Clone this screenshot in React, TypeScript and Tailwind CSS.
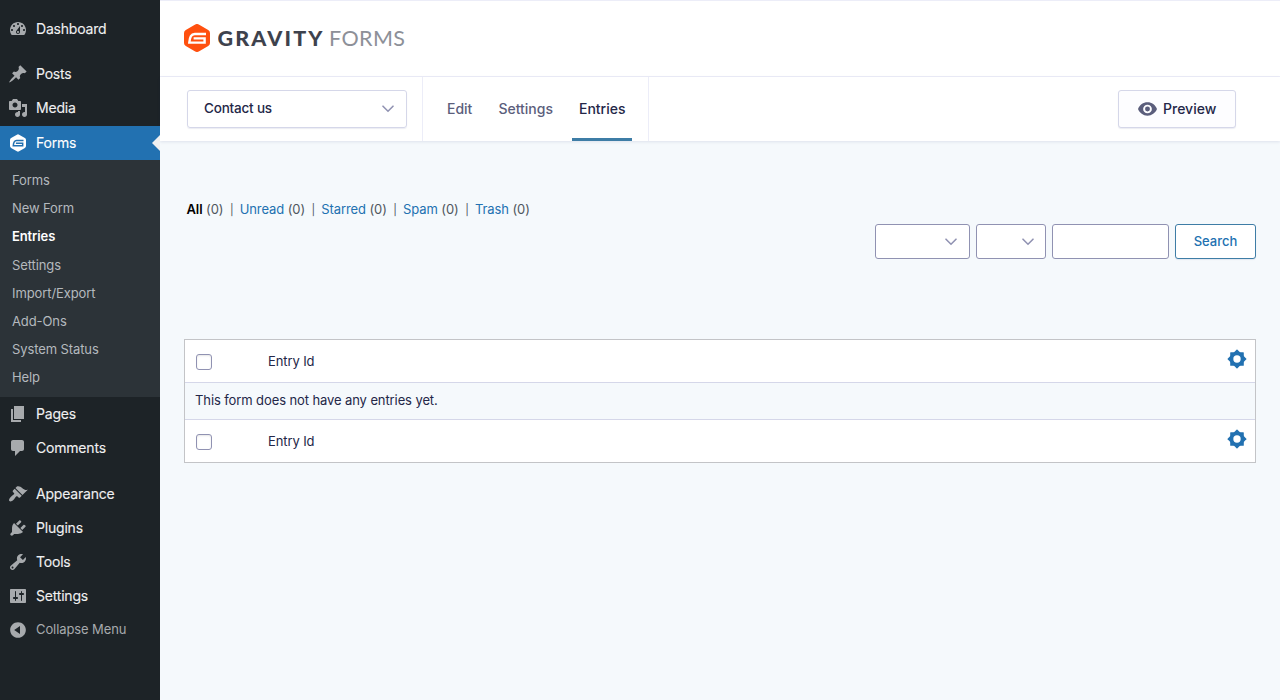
import React from "react";

const icons: Record<string, string> = {
  dashboard:
    "M3.76 16h12.48c1.1-1.37 1.76-3.11 1.76-5 0-4.42-3.58-8-8-8s-8 3.58-8 8c0 1.89.66 3.63 1.76 5zM10 4c.55 0 1 .45 1 1s-.45 1-1 1-1-.45-1-1 .45-1 1-1zM6 6c.55 0 1 .45 1 1s-.45 1-1 1-1-.45-1-1 .45-1 1-1zm8 0c.55 0 1 .45 1 1s-.45 1-1 1-1-.45-1-1 .45-1 1-1zm-5.37 5.55L12 7v6c0 1.1-.9 2-2 2s-2-.9-2-2c0-.57.24-1.08.63-1.45zM4 10c.55 0 1 .45 1 1s-.45 1-1 1-1-.45-1-1 .45-1 1-1zm12 0c.55 0 1 .45 1 1s-.45 1-1 1-1-.45-1-1 .45-1 1-1zm-5 3c0-.55-.45-1-1-1s-1 .45-1 1 .45 1 1 1 1-.45 1-1z",
  posts:
    "M10.44 3.02l1.82-1.82 6.36 6.35-1.83 1.82c-1.05-.68-2.48-.57-3.41.36l-.75.75c-.92.93-1.04 2.35-.35 3.41l-1.83 1.82-2.41-2.41-2.8 2.79c-.42.42-3.38 2.71-3.8 2.29s1.86-3.39 2.28-3.81l2.79-2.79L4.1 9.36l1.83-1.82c1.05.69 2.48.57 3.4-.36l.75-.75c.93-.92 1.05-2.35.36-3.41z",
  media:
    "M13 11V4c0-.55-.45-1-1-1h-1.67L9 1H5L3.67 3H2c-.55 0-1 .45-1 1v7c0 .55.45 1 1 1h10c.55 0 1-.45 1-1zM7 4.5c1.38 0 2.5 1.12 2.5 2.5S8.38 9.5 7 9.5 4.5 8.38 4.5 7 5.62 4.5 7 4.5zM14 6h5v10.5c0 1.38-1.12 2.5-2.5 2.5S14 17.88 14 16.5s1.12-2.5 2.5-2.5c.17 0 .34.02.5.05V9h-3V6zm-4 8.05V13h2v3.5c0 1.38-1.12 2.5-2.5 2.5S7 17.88 7 16.5 8.12 14 9.5 14c.17 0 .34.02.5.05z",
  pages: "M6 15V2h10v13H6zm-1 1h8v2H3V5h2v11z",
  comments:
    "M5 2h9c1.1 0 2 .9 2 2v7c0 1.1-.9 2-2 2h-2l-5 5v-5H5c-1.1 0-2-.9-2-2V4c0-1.1.9-2 2-2z",
  appearance:
    "M14.48 11.06L7.41 3.99l1.5-1.5c.5-.56 2.3-.47 3.51.32 1.21.8 1.43 1.28 2.91 2.1 1.18.64 2.45 1.26 4.45.85zm-.71.71L6.7 4.7 4.93 6.47c-.39.39-.39 1.02 0 1.41l1.06 1.06c.39.39.39 1.03 0 1.42-.6.6-1.43 1.11-2.21 1.69-.35.26-.7.53-1.01.84C1.43 14.23.4 16.08 1.4 17.07c.99 1 2.84-.03 4.18-1.36.31-.31.58-.66.85-1.02.57-.78 1.08-1.61 1.69-2.21.39-.39 1.02-.39 1.41 0l1.06 1.06c.39.39 1.02.39 1.41 0z",
  plugins:
    "M13.11 4.36L9.87 7.6 8 5.73l3.24-3.24c.35-.34 1.05-.2 1.56.32.52.51.66 1.21.31 1.55zm-8 1.77l.91-1.12 9.01 9.01-1.19.84c-.71.71-2.63 1.16-3.82 1.16H6.14L4.9 17.26c-.59.59-1.54.59-2.12 0-.59-.58-.59-1.53 0-2.12l1.24-1.24v-3.88c0-1.13.4-3.19 1.09-3.89zm7.26 3.97l3.24-3.24c.34-.35 1.04-.21 1.55.31.52.51.66 1.21.31 1.55l-3.24 3.25z",
  tools:
    "M16.68 9.77c-1.34 1.34-3.3 1.67-4.95.99l-5.41 6.52c-.99.99-2.59.99-3.58 0s-.99-2.59 0-3.57l6.52-5.42c-.68-1.65-.35-3.61.99-4.95 1.28-1.28 3.12-1.62 4.72-1.06l-2.89 2.89 2.82 2.82 2.86-2.87c.53 1.58.18 3.39-1.08 4.65zM3.81 16.21c.4.39 1.04.39 1.43 0 .4-.4.4-1.04 0-1.43-.39-.4-1.03-.4-1.43 0-.39.39-.39 1.03 0 1.43z",
  settings:
    "M18 16V4c0-.55-.45-1-1-1H3c-.55 0-1 .45-1 1v12c0 .55.45 1 1 1h14c.55 0 1-.45 1-1zM8 11h1c.55 0 1 .45 1 1s-.45 1-1 1H8v1.5c0 .28-.22.5-.5.5s-.5-.22-.5-.5V13H6c-.55 0-1-.45-1-1s.45-1 1-1h1V5.5c0-.28.22-.5.5-.5s.5.22.5.5V11zm5-2h-1c-.55 0-1-.45-1-1s.45-1 1-1h1V5.5c0-.28.22-.5.5-.5s.5.22.5.5V7h1c.55 0 1 .45 1 1s-.45 1-1 1h-1v5.5c0 .28-.22.5-.5.5s-.5-.22-.5-.5V9z",
  collapse:
    "M10 2.16c4.33 0 7.84 3.51 7.84 7.84s-3.51 7.84-7.84 7.84S2.16 14.33 2.16 10 5.67 2.16 10 2.16zm2 11.72V6.12L6.18 9.97z",
};

const submenu = [
  "Forms",
  "New Form",
  "Entries",
  "Settings",
  "Import/Export",
  "Add-Ons",
  "System Status",
  "Help",
];

const filters = ["All", "Unread", "Starred", "Spam", "Trash"];

const MenuItem = ({ icon, label }: { icon: string; label: string }) => (
  <a href="#" className="flex h-[34px] items-center pl-2 text-[14px] tracking-[-0.2px] text-[#f0f0f1]">
    <svg viewBox="0 0 20 20" className="mr-2 size-5 fill-[#a7aaad]">
      <path fillRule="evenodd" d={icons[icon]} />
    </svg>
    <span className="pb-0.5 [-webkit-text-stroke:0.1px]">{label}</span>
  </a>
);

const Hexagon = ({ className }: { className: string }) => (
  <svg viewBox="0 0 26 28" className={className}>
    <path
      stroke="none"
      d="M11.2.5a3.6 3.6 0 0 1 3.6 0l9.4 5.4A3.6 3.6 0 0 1 26 9v10a3.6 3.6 0 0 1-1.8 3.1l-9.4 5.4a3.6 3.6 0 0 1-3.6 0l-9.4-5.4A3.6 3.6 0 0 1 0 19V9a3.6 3.6 0 0 1 1.8-3.1z"
    />
    <path
      fill="none"
      strokeWidth="2.4"
      d="M22 10H10.800C8.800 10 7.700 10.800 6.900 12.200 6 13.800 5.500 16 5.300 18.600H20.600V14.400H9.600"
    />
  </svg>
);

const Chevron = () => (
  <svg viewBox="0 0 12 8" fill="none" className="h-2 w-3">
    <path d="M1 1.200l5 5 5-5" stroke="#9092b2" strokeWidth="1.600" strokeLinecap="round" />
  </svg>
);

// eight pointed cog, two squares laid over each other
const Gear = () => (
  <svg viewBox="0 0 20 20" className="size-5 fill-[#2271b1]">
    <rect x="3.200" y="3.200" width="13.600" height="13.600" rx="0.600" />
    <rect x="3.200" y="3.200" width="13.600" height="13.600" rx="0.300" transform="rotate(45 10 10)" />
    <circle cx="10" cy="10" r="3.700" className="fill-white" />
  </svg>
);

const TableRow = () => (
  <div className="flex h-[42px] items-center bg-white pl-[11px] pr-2">
    <span className="mt-0.5 size-4 rounded-[3px] border border-[#9092b2] bg-white shadow-[inset_0_1px_2px_rgba(0,0,0,0.1)]" />
    <span className="ml-14 mt-0.5 flex-1">Entry Id</span>
    <span className="-mt-1">
      <Gear />
    </span>
  </div>
);

const App = () => {
  return (
    <div className="flex h-[700px] w-[1280px] overflow-hidden bg-[#f5f9fc] font-['Inter',sans-serif] text-[13px] tracking-[-0.1px] text-[#242748]">
      {/* Admin menu */}
      <nav className="w-40 shrink-0 bg-[#1d2327] pt-3">
        <MenuItem icon="dashboard" label="Dashboard" />
        <div className="mt-[11px]">
          <MenuItem icon="posts" label="Posts" />
          <MenuItem icon="media" label="Media" />
        </div>
        <a
          href="#"
          className="relative mt-px flex h-[34px] items-center bg-[#2271b1] pl-[10px] text-[14px] tracking-[-0.2px] text-white"
        >
          <Hexagon className="mr-[10px] h-[18px] w-4 fill-white stroke-[#2271b1]" />
          <span className="pb-0.5 [-webkit-text-stroke:0.1px]">Forms</span>
          <span className="absolute right-0 top-[9px] border-y-8 border-r-8 border-y-transparent border-r-[#f0f0f1]" />
        </a>
        <ul className="h-[237px] bg-[#2c3338] pt-[6.6px] text-[#b4b9be]">
          {submenu.map((item) => (
            <li
              key={item}
              className={
                item === "Entries"
                  ? "flex h-[28.2px] items-center pl-3 font-semibold text-white"
                  : "flex h-[28.2px] items-center pl-3"
              }
            >
              {item}
            </li>
          ))}
        </ul>
        <MenuItem icon="pages" label="Pages" />
        <MenuItem icon="comments" label="Comments" />
        <div className="mt-3">
          <MenuItem icon="appearance" label="Appearance" />
          <MenuItem icon="plugins" label="Plugins" />
          <MenuItem icon="tools" label="Tools" />
          <MenuItem icon="settings" label="Settings" />
        </div>
        <a href="#" className="flex h-[34px] items-center pl-2 text-[#a7aaad]">
          <svg viewBox="0 0 20 20" className="mr-2 size-5 fill-[#a7aaad]">
            <path fillRule="evenodd" d={icons.collapse} />
          </svg>
          Collapse Menu
        </a>
      </nav>

      <main className="min-w-0 flex-1">
        {/* Logo */}
        <header className="flex h-[77px] items-center border-y border-[#ecedf8] bg-white pb-px pl-6">
          <Hexagon className="h-7 w-[26px] fill-[#ff500f] stroke-white" />
          <svg viewBox="0 0 190 28" className="ml-2 h-7 w-[190px] font-['Lato',sans-serif] tracking-normal">
            <text x="-0.500" y="22" fontSize="21.500" fontWeight="900" fill="#3e424d" textLength="105">
              GRAVITY
            </text>
            <text x="111" y="22" fontSize="21.500" fontWeight="400" fill="#8d9098" textLength="76">
              FORMS
            </text>
          </svg>
        </header>

        {/* Form toolbar */}
        <div className="flex h-16 bg-white shadow-[0_1px_3px_rgba(18,25,97,0.1)]">
          <div className="flex w-[263px] border-r border-[#ecedf8] pl-[27px] pt-[13px]">
            <button className="flex h-[38px] w-[220px] items-center justify-between rounded-[3px] border border-[#d5d7e9] px-4 pr-3 shadow-[0_1px_1px_rgba(18,25,97,0.08)]">
              <span className="pb-0.5 text-[13.5px] font-medium tracking-[-0.2px]">Contact us</span>
              <Chevron />
            </button>
          </div>
          <div className="flex w-[226px] border-r border-[#ecedf8] pl-[17px] text-[14px] font-medium tracking-normal text-[#5b5e7c]">
            <a href="#" className="flex items-center px-[7px] pb-0.5">Edit</a>
            <a href="#" className="ml-3 flex items-center px-[7px] pb-0.5">Settings</a>
            <a href="#" className="ml-3 flex items-center border-b-[3px] border-[#3e7da6] px-[7px] pt-px text-[#242748]">
              Entries
            </a>
          </div>
          <button className="ml-auto mr-11 mt-[13px] flex h-[38px] w-[118px] items-center rounded-[3px] border border-[#d5d7e9] bg-[#fdfdff] pl-[19px] text-[14px] font-medium tracking-normal shadow-[0_1px_1px_rgba(18,25,97,0.08)]">
            <svg viewBox="0 0 20 14" className="mr-[6px] h-[14px] w-[19px] fill-[#5b5e7c]">
              <path
                fillRule="evenodd"
                d="M10 0C5.500 0 1.700 2.800 0 7c1.700 4.200 5.500 7 10 7s8.300-2.800 10-7c-1.700-4.200-5.500-7-10-7zm0 2.400a4.600 4.600 0 1 1 0 9.200 4.600 4.600 0 0 1 0-9.200zm0 2a2.600 2.600 0 1 0 0 5.200 2.600 2.600 0 0 0 0-5.200z"
              />
            </svg>
            <span className="pb-px">Preview</span>
          </button>
        </div>

        {/* Entries */}
        <div className="px-6 pt-[58px]">
          <ul className="flex h-[22px] items-center pl-[2.5px] text-[#50575e]">
            {filters.map((item, i) => (
              <li key={item} className="flex items-center whitespace-pre">
                {i > 0 && <span className="pl-[6.5px] pr-[6.2px] text-[11px]">|</span>}
                <a href="#" className={i === 0 ? "font-semibold text-black" : "text-[#2271b1]"}>
                  {item}
                </a>
                <span> (0)</span>
              </li>
            ))}
          </ul>
          <div className="mt-[3px] flex h-[35px] justify-end gap-[6px]">
            <span className="flex w-[95px] items-center justify-end rounded-[3px] border border-[#9092b2] bg-white pr-3">
              <Chevron />
            </span>
            <span className="flex w-[70px] items-center justify-end rounded-[3px] border border-[#9092b2] bg-white pr-[11px]">
              <Chevron />
            </span>
            <input className="w-[117px] rounded-[3px] border border-[#9092b2] bg-white" />
            <button className="w-[81px] rounded-[3px] border border-[#3e7da6] bg-white font-medium tracking-normal text-[#2271b1] shadow-[0_1px_1px_rgba(18,25,97,0.08)]">
              Search
            </button>
          </div>
          <div className="mt-20 border border-[#c3c4c7]">
            <TableRow />
            <p className="flex h-[38px] items-center border-y border-[#d5d7e9] pl-[10px]">
              This form does not have any entries yet.
            </p>
            <TableRow />
          </div>
        </div>
      </main>
    </div>
  );
};

export default App;
